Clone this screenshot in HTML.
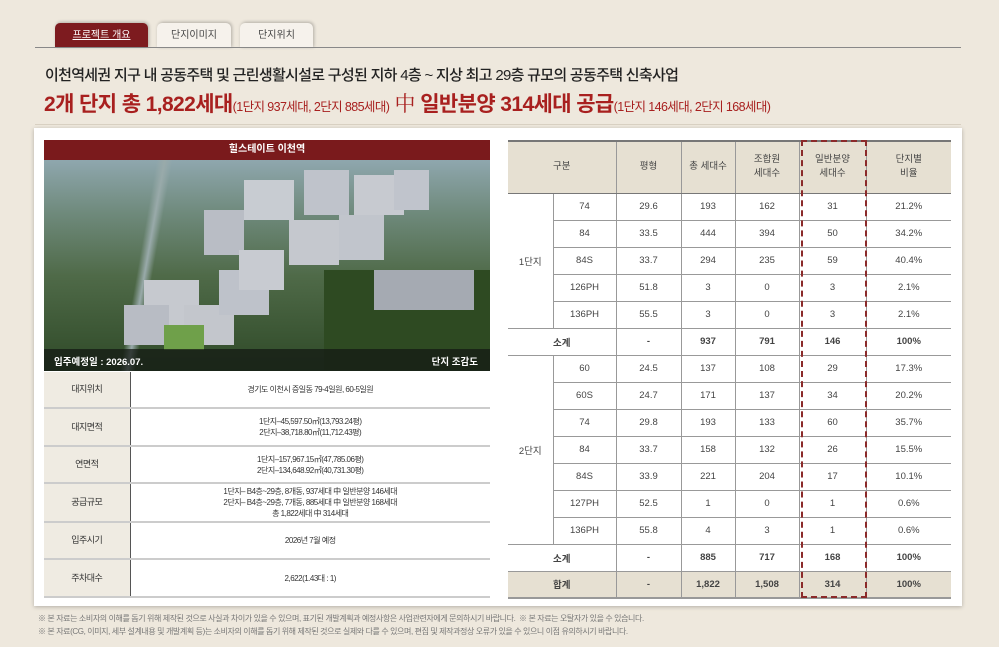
<!DOCTYPE html>
<html><head><meta charset="utf-8"><style>
*{margin:0;padding:0;box-sizing:border-box}
body{width:999px;height:647px;background:#eee8dd;font-family:"Liberation Sans","Noto Sans CJK KR",sans-serif;position:relative;overflow:hidden;color:#333}
.a{position:absolute}
.tab{position:absolute;top:23px;height:25px;border-radius:5px 5px 0 0;font-size:10px;text-align:center;line-height:25px;background:#f6f2ec;color:#444;box-shadow:1px -1px 3px rgba(0,0,0,.25)}
.panel{left:34px;top:128px;width:928px;height:478px;background:#fff;box-shadow:0 1px 4px rgba(0,0,0,.25)}
table{border-collapse:collapse;table-layout:fixed}
#rt{position:absolute;left:508px;top:140px;width:443px;font-size:9.5px;color:#444}
#rt td{height:27px;text-align:center;border-bottom:1px solid #999;border-left:1px solid #999}
#rt tr td:first-child{border-left:none}
#rt td.nl{border-left:none}
#rt .h td{height:52px;background:#e6e0d2;border-top:2px solid #777;border-bottom:1px solid #777;line-height:14px}
#rt .tot td{background:#e6e0d2;font-weight:bold;border-bottom:2px solid #999}
#lt{position:absolute;left:44px;top:372px;width:446px;font-size:8px;letter-spacing:-.5px;color:#333}
#lt td{border-bottom:2px solid #ccc;text-align:center;line-height:11px}
#lt td:first-child{background:#efebe2;border-right:1px solid #555;font-size:9px}
.dash{left:801px;top:140px;width:66px;height:458px;border:2px dashed #8b2a2a}
</style></head><body>
<div class="tab" style="left:55px;width:93px;background:#7d1b1f;color:#fff;text-decoration:underline">프로젝트 개요</div>
<div class="tab" style="left:157px;width:74px">단지이미지</div>
<div class="tab" style="left:240px;width:73px">단지위치</div>
<div class="a" style="left:35px;top:47px;width:926px;height:1px;background:#888"></div>
<div class="a" style="left:45px;top:64px;font-size:15px;color:#222;letter-spacing:-.7px;font-weight:500">이천역세권 지구 내 공동주택 및 근린생활시설로 구성된 지하 4층 ~ 지상 최고 29층 규모의 공동주택 신축사업</div>
<div class="a" style="left:44px;top:88px;font-size:21px;color:#a8201f;font-weight:bold;letter-spacing:-.6px;white-space:nowrap">2개 단지 총 1,822세대<span style="font-size:12.5px;font-weight:normal">(1단지 937세대, 2단지 885세대)</span> <span style="font-weight:normal;font-family:'Noto Serif CJK SC',serif">中</span> 일반분양 314세대 공급<span style="font-size:12.5px;font-weight:normal">(1단지 146세대, 2단지 168세대)</span></div>
<div class="a" style="left:35px;top:124px;width:926px;height:1px;background:#d8d0c2"></div>
<div class="a panel"></div>
<div class="a" style="left:44px;top:140px;width:446px;height:20px;background:#7a1a1c;color:#fff;font-size:10px;text-align:center;line-height:20px;font-weight:bold">힐스테이트 이천역</div>
<div class="a" style="left:44px;top:160px;width:446px;height:211px;background:linear-gradient(180deg,#8fa7ae 0%,#6f8a7c 25%,#4f6a48 55%,#2f4a28 100%);overflow:hidden">
<div class="a" style="left:50px;top:0;width:120px;height:211px;background:linear-gradient(100deg,transparent 40%,#9aa 45%,transparent 50%)"></div>
<div class="a" style="left:280px;top:110px;width:166px;height:100px;background:#2e4a22"></div>
<div class="a" style="left:200px;top:20px;width:50px;height:40px;background:#c8ccd2"></div>
<div class="a" style="left:260px;top:10px;width:45px;height:45px;background:#bfc3cb"></div>
<div class="a" style="left:310px;top:15px;width:50px;height:40px;background:#c7cad0"></div>
<div class="a" style="left:350px;top:10px;width:35px;height:40px;background:#c0c4cc"></div>
<div class="a" style="left:160px;top:50px;width:40px;height:45px;background:#b9bdc5"></div>
<div class="a" style="left:245px;top:60px;width:50px;height:45px;background:#c5c8ce"></div>
<div class="a" style="left:295px;top:55px;width:45px;height:45px;background:#c1c5cc"></div>
<div class="a" style="left:100px;top:120px;width:55px;height:45px;background:#c6c9cf"></div>
<div class="a" style="left:80px;top:145px;width:45px;height:40px;background:#b8bcc4"></div>
<div class="a" style="left:140px;top:145px;width:50px;height:40px;background:#c3c6cc"></div>
<div class="a" style="left:175px;top:110px;width:50px;height:45px;background:#bec2ca"></div>
<div class="a" style="left:195px;top:90px;width:45px;height:40px;background:#c8cbd1"></div>
<div class="a" style="left:120px;top:165px;width:40px;height:25px;background:#6fa04a"></div>
<div class="a" style="left:330px;top:110px;width:100px;height:40px;background:#a5aab2"></div>
<div class="a" style="left:0;top:189px;width:446px;height:22px;background:rgba(20,25,20,.75)"></div>
<div class="a" style="left:10px;top:194px;color:#fff;font-size:9.5px;font-weight:bold">입주예정일 : 2026.07.</div>
<div class="a" style="right:12px;top:194px;color:#fff;font-size:9.5px;font-weight:bold">단지 조감도</div>
</div>
<table id="lt"><colgroup><col style="width:86px"><col></colgroup>
<tr><td style="height:36px">대지위치</td><td>경기도 이천시 증일동 79-4일원, 60-5일원</td></tr>
<tr><td style="height:38px">대지면적</td><td>1단지–45,597.50㎡(13,793.24평)<br>2단지–38,718.80㎡(11,712.43평)</td></tr>
<tr><td style="height:37px">연면적</td><td>1단지–157,967.15㎡(47,785.06평)<br>2단지–134,648.92㎡(40,731.30평)</td></tr>
<tr><td style="height:39px">공급규모</td><td>1단지– B4층~29층, 8개동, 937세대 中 일반분양 146세대<br>2단지– B4층~29층, 7개동, 885세대 中 일반분양 168세대<br>총 1,822세대 中 314세대</td></tr>
<tr><td style="height:37px">입주시기</td><td>2026년 7월 예정</td></tr>
<tr><td style="height:38px">주차대수</td><td>2,622(1.43대 : 1)</td></tr>
</table>
<table id="rt"><colgroup><col style="width:45px"><col style="width:63px"><col style="width:65px"><col style="width:54px"><col style="width:64px"><col style="width:67px"><col style="width:85px"></colgroup>
<tr class="h"><td colspan="2">구분</td><td>평형</td><td>총 세대수</td><td>조합원<br>세대수</td><td>일반분양<br>세대수</td><td>단지별<br>비율</td></tr>
<tr><td rowspan="5" style="border-right:1px solid #999">1단지</td><td class="nl">74</td><td>29.6</td><td>193</td><td>162</td><td>31</td><td>21.2%</td></tr>
<tr><td class="nl">84</td><td>33.5</td><td>444</td><td>394</td><td>50</td><td>34.2%</td></tr>
<tr><td class="nl">84S</td><td>33.7</td><td>294</td><td>235</td><td>59</td><td>40.4%</td></tr>
<tr><td class="nl">126PH</td><td>51.8</td><td>3</td><td>0</td><td>3</td><td>2.1%</td></tr>
<tr><td class="nl">136PH</td><td>55.5</td><td>3</td><td>0</td><td>3</td><td>2.1%</td></tr>
<tr style="font-weight:bold"><td colspan="2">소계</td><td>-</td><td>937</td><td>791</td><td>146</td><td>100%</td></tr>
<tr><td rowspan="7" style="border-right:1px solid #999">2단지</td><td class="nl">60</td><td>24.5</td><td>137</td><td>108</td><td>29</td><td>17.3%</td></tr>
<tr><td class="nl">60S</td><td>24.7</td><td>171</td><td>137</td><td>34</td><td>20.2%</td></tr>
<tr><td class="nl">74</td><td>29.8</td><td>193</td><td>133</td><td>60</td><td>35.7%</td></tr>
<tr><td class="nl">84</td><td>33.7</td><td>158</td><td>132</td><td>26</td><td>15.5%</td></tr>
<tr><td class="nl">84S</td><td>33.9</td><td>221</td><td>204</td><td>17</td><td>10.1%</td></tr>
<tr><td class="nl">127PH</td><td>52.5</td><td>1</td><td>0</td><td>1</td><td>0.6%</td></tr>
<tr><td class="nl">136PH</td><td>55.8</td><td>4</td><td>3</td><td>1</td><td>0.6%</td></tr>
<tr style="font-weight:bold"><td colspan="2">소계</td><td>-</td><td>885</td><td>717</td><td>168</td><td>100%</td></tr>
<tr class="tot"><td colspan="2">합계</td><td>-</td><td>1,822</td><td>1,508</td><td>314</td><td>100%</td></tr>
</table>
<div class="a dash"></div>
<div class="a" style="left:38px;top:612px;font-size:8px;color:#777;letter-spacing:-.4px;line-height:13px;white-space:nowrap">※ 본 자료는 소비자의 이해를 돕기 위해 제작된 것으로 사실과 차이가 있을 수 있으며, 표기된 개발계획과 예정사항은 사업관련자에게 문의하시기 바랍니다. &nbsp;※ 본 자료는 오탈자가 있을 수 있습니다.<br>※ 본 자료(CG, 이미지, 세부 설계내용 및 개발계획 등)는 소비자의 이해를 돕기 위해 제작된 것으로 실제와 다를 수 있으며, 편집 및 제작과정상 오류가 있을 수 있으니 이점 유의하시기 바랍니다.</div>
</body></html>
